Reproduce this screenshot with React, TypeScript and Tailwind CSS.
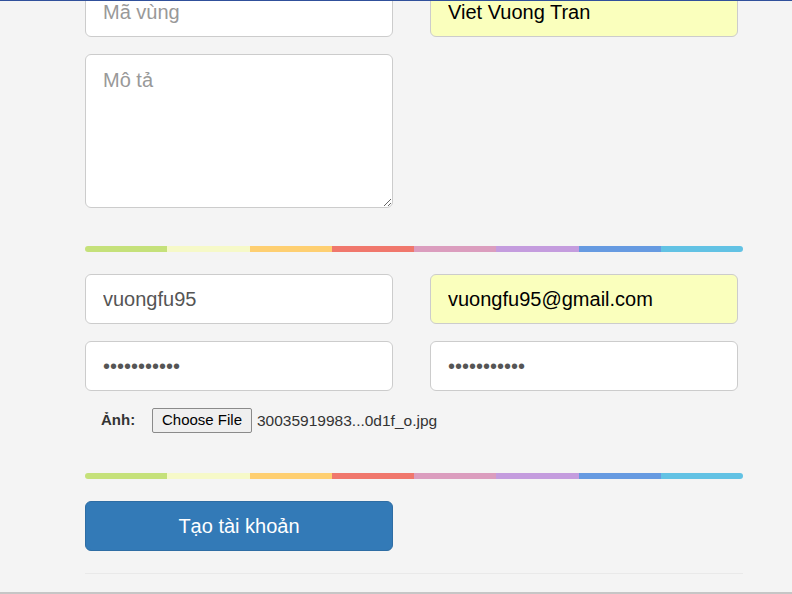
const barColors = [
  'bg-[#c5e17a]',
  'bg-[#f6f9c8]',
  'bg-[#fecf71]',
  'bg-[#f0776c]',
  'bg-[#db9dbe]',
  'bg-[#c49cde]',
  'bg-[#669ae1]',
  'bg-[#62c2e4]',
];

const ColorBar = ({ className }: { className: string }) => (
  <div className={`flex h-[6px] w-[658px] overflow-hidden rounded-full ${className}`}>
    {barColors.map((c) => (
      <div key={c} className={`flex-1 ${c}`} />
    ))}
  </div>
);

const inputBase =
  'h-[50px] w-full rounded-[6px] border border-[#cccccc] px-[17px] text-[20px] outline-none placeholder:text-[#999999]';

export default function App() {
  return (
    <div className="relative flex h-[594px] flex-col overflow-hidden bg-[#f4f4f4] font-['Liberation_Sans',Arial,sans-serif]">
      {/* top nav edge */}
      <div className="relative z-10 h-px shrink-0 bg-[#30509b]" />

      <form className="ml-[85px] mt-[-14px] flex w-[658px] flex-col" onSubmit={(e) => e.preventDefault()}>
        <div className="grid grid-cols-[308px_308px] gap-x-[37px]">
          <input className={`${inputBase} bg-white text-[#555555]`} placeholder="Mã vùng" />
          <input className={`${inputBase} bg-[#faffbd] text-black`} defaultValue="Viet Vuong Tran" />
        </div>

        <div className="mt-[17px] grid grid-cols-[308px_308px] gap-x-[37px]">
          <textarea
            className="h-[154px] w-full rounded-[6px] border border-[#cccccc] bg-white px-[17px] py-[10px] text-[20px] text-[#555555] outline-none placeholder:text-[#999999]"
            placeholder="Mô tả"
          />
        </div>

        <ColorBar className="mt-[38px]" />

        <div className="mt-[22px] grid grid-cols-[308px_308px] gap-x-[37px]">
          <input className={`${inputBase} bg-white text-[#555555]`} defaultValue="vuongfu95" />
          <input className={`${inputBase} bg-[#faffbd] text-black`} defaultValue="vuongfu95@gmail.com" />
        </div>

        <div className="mt-[17px] grid grid-cols-[308px_308px] gap-x-[37px]">
          <input type="password" className={`${inputBase} bg-white text-[#555555]`} defaultValue="abcdefghijk" />
          <input type="password" className={`${inputBase} bg-white text-[#555555]`} defaultValue="abcdefghijk" />
        </div>

        <div className="mt-[17px] flex h-[25px] items-center pl-[16px] text-[15px] text-[#333333]">
          <span className="w-[51px] font-bold">Ảnh:</span>
          <button
            type="button"
            className="h-[25px] w-[100px] rounded-[2px] border border-[#8a8a8a] bg-[#efefef] text-[15px] text-black"
          >
            Choose File
          </button>
          <span className="ml-[5px] text-[15.5px]">30035919983...0d1f_o.jpg</span>
        </div>

        <ColorBar className="mt-[40px]" />

        <button
          type="submit"
          className="mt-[22px] h-[50px] w-[308px] rounded-[6px] border border-[#2e6da4] bg-[#337ab7] text-[20px] text-white"
        >
          Tạo tài khoản
        </button>

        <div className="mt-[22px] h-px w-[658px] bg-[#e9e9e9]" />
      </form>

      <div className="absolute bottom-0 left-0 h-[2px] w-full bg-[#c6c6c6]" />
    </div>
  );
}
